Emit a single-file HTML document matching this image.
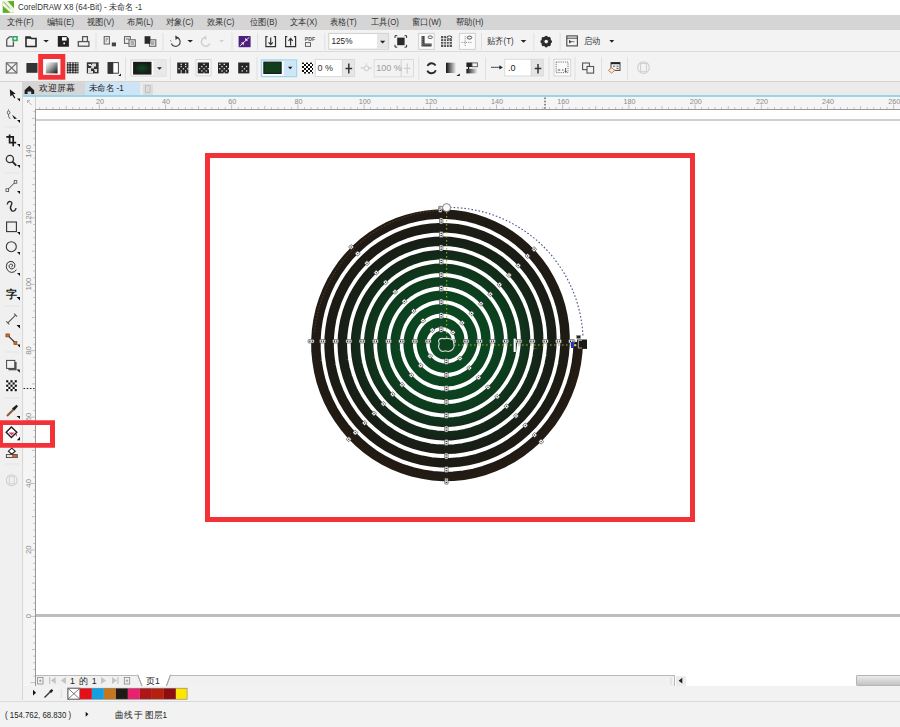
<!DOCTYPE html>
<html><head><meta charset="utf-8">
<style>
*{margin:0;padding:0;box-sizing:border-box}
html,body{width:900px;height:727px;overflow:hidden;background:#f2f2f2;font-family:"Liberation Sans",sans-serif;color:#222}
.a{position:absolute}
.t{position:absolute;white-space:nowrap;line-height:1;font-size:9px;color:#333;transform-origin:0 0}
.m{font-size:8.5px;transform:scaleX(0.92)}
#title{left:0;top:0;width:900px;height:15px;background:#fff}
#menu{left:0;top:15px;width:900px;height:15px;background:#d5d5d5}
#tb1{left:0;top:30px;width:900px;height:22px;background:#f3f3f3;border-bottom:1px solid #dcdcdc}
#tb2{left:0;top:52px;width:900px;height:30px;background:#f3f3f3;border-bottom:1px solid #d4d4d4}
#tabs{left:23px;top:82px;width:877px;height:13px;background:#ebebeb}
#blue{left:23px;top:95.2px;width:877px;height:1.6px;background:#98d5e8}
#tool{left:0;top:82px;width:23px;height:618px;background:#f0f0f0;border-right:1px solid #d6d6d6}
#hrul{left:23px;top:97px;width:877px;height:12px;background:#f5f5f5}
#vrul{left:23px;top:97px;width:12px;height:589px;background:#f5f5f5}
#canvas{left:35px;top:109px;width:865px;height:577px;background:#fff;border-left:1px solid #999;border-top:1px solid #999}
.sep{position:absolute;width:1px;background:#dadada}
</style></head><body>
<div class="a" id="title"></div>
<div class="a" id="menu"></div>
<div class="a" id="tb1"></div>
<div class="a" id="tb2"></div>
<div class="a" id="tool"></div>
<div class="a" id="tabs"></div>
<div class="a" id="blue"></div>
<div class="a" id="hrul"></div>
<div class="a" id="vrul"></div>
<div class="a" id="canvas"></div>

<!-- title -->
<div class="t" style="left:18px;top:3px;font-size:9px;color:#333;transform:scaleX(0.89)">CorelDRAW X8 (64-Bit) - 未命名 -1</div>
<!-- menu -->
<div class="t m" style="left:7px;top:18px">文件(F)</div>
<div class="t m" style="left:47px;top:18px">编辑(E)</div>
<div class="t m" style="left:87px;top:18px">视图(V)</div>
<div class="t m" style="left:127px;top:18px">布局(L)</div>
<div class="t m" style="left:166px;top:18px">对象(C)</div>
<div class="t m" style="left:207px;top:18px">效果(C)</div>
<div class="t m" style="left:250px;top:18px">位图(B)</div>
<div class="t m" style="left:290px;top:18px">文本(X)</div>
<div class="t m" style="left:330px;top:18px">表格(T)</div>
<div class="t m" style="left:371px;top:18px">工具(O)</div>
<div class="t m" style="left:412px;top:18px">窗口(W)</div>
<div class="t m" style="left:456px;top:18px">帮助(H)</div>


<!-- toolbar1 icons -->
<svg class="a" style="left:0;top:0" width="900" height="100" viewBox="0 0 900 100">
<g fill="none" stroke="#555" stroke-width="1.3">
<path d="M6.7 39.5 L9.5 36.8 L12 36.8 M13.4 41.5 V46.2 H6.7 V39.5"/>
</g>
<rect x="12.2" y="36" width="5.6" height="5.2" fill="#2ea85a"/>
<path d="M15 37.2 V40 M13.6 38.6 H16.4" stroke="#fff" stroke-width="1"/>
<path d="M26 37 H30 L31.5 38.5 H36 V46.5 H26 Z" fill="none" stroke="#2a2a2a" stroke-width="1.6"/>
<path d="M26 37 H30 L31.5 38.8 H26 Z" fill="#2a2a2a"/>
<path d="M43.3 40 H48.9 L46.1 42.6 Z" fill="#222"/>
<path d="M57.8 36 H66.5 L68.9 38.4 V46.7 H57.8 Z" fill="#222"/>
<rect x="62" y="37.2" width="4.6" height="3.4" fill="#fff"/>
<rect x="63.4" y="42.6" width="1.6" height="1.6" fill="#fff"/>
<g fill="none" stroke="#555" stroke-width="1.3">
<path d="M82.6 41.6 V36.6 H87.4 V41.6"/>
<rect x="78.3" y="41.6" width="10.6" height="4.6"/>
</g>
<rect x="95.5" y="33" width="1" height="17" fill="#e0e0e0"/>

<!-- logo -->
<rect x="2.7" y="1.1" width="11.3" height="11.7" fill="#5cae22"/>
<path d="M2.7 1.1 H7.4 L14 8.2 V12.8 H10.6 L2.7 5.8 Z" fill="#eef8dc"/>
<path d="M3.6 1.8 L10 8.6" stroke="#8a9a70" stroke-width="1"/>
<!-- cut/copy/paste -->
<g fill="none" stroke="#666" stroke-width="1.1">
<rect x="104.2" y="36.6" width="5.2" height="7.4"/>
<path d="M105.6 39 H108 M105.6 41 H107"/>
<rect x="124.5" y="36.6" width="5.8" height="6.8"/>
<rect x="129" y="39.8" width="6.3" height="6.5" fill="#f3f3f3"/>
<path d="M130.5 42 H134 M130.5 44 H134 M125.8 39 H129"/>
<rect x="149.5" y="39.8" width="6.3" height="6.5" fill="#f3f3f3"/>
<path d="M151 42 H154.5 M151 44 H154.5"/>
</g>
<rect x="111.8" y="42.5" width="4.2" height="3.8" fill="#444"/>
<rect x="144.6" y="36.2" width="5.8" height="7.6" fill="#2a2a2a"/>
<rect x="162.5" y="33" width="1" height="17" fill="#e0e0e0"/>
<!-- undo/redo -->
<path d="M177.5 37.6 A4.6 4.6 0 1 1 171.3 43.5" fill="none" stroke="#4a4a4a" stroke-width="1.2"/>
<path d="M175.2 35.6 L178.8 37.6 L175.6 40 Z" fill="#3a3a3a"/>
<path d="M171 41.5 L170.5 40" stroke="#888" stroke-width="1"/>
<path d="M187.4 40 H193 L190.2 42.6 Z" fill="#222"/>
<path d="M204.5 37.6 A4.4 4.4 0 1 0 209.8 43.5" fill="none" stroke="#cfcfcf" stroke-width="1.5"/>
<path d="M206.5 35.6 L203 37.6 L206.2 40 Z" fill="#cfcfcf"/>
<path d="M219.3 40 H224 L221.6 42.5 Z" fill="#cfcfcf"/>
<rect x="231.5" y="33" width="1" height="17" fill="#e0e0e0"/>
<!-- purple -->
<rect x="238.6" y="36" width="12" height="11.2" fill="#4e1f80"/>
<path d="M239.8 46 L249.4 37.2" stroke="#e6dcf0" stroke-width="1"/>
<path d="M241 42.5 L243.8 42.6 L243.6 45.4 Z M248 40.7 L245.2 40.6 L245.4 37.8 Z" fill="#fff"/>
<rect x="257" y="33" width="1" height="17" fill="#e0e0e0"/>
<!-- import/export -->
<g fill="none" stroke="#333" stroke-width="1.2">
<path d="M267.6 36.6 H265.9 V46.6 H275.5 V36.6 H273.8"/>
<path d="M270.7 37.5 V44.5 M268.6 42.3 L270.7 44.6 L272.8 42.3"/>
<path d="M287.3 36.6 H285.6 V46.6 H295.6 V36.6 H293.9"/>
<path d="M290.6 45.5 V38.5 M288.5 40.8 L290.6 38.4 L292.7 40.8"/>
</g>
<text x="304.8" y="41.2" font-size="5.2" font-family="Liberation Sans" fill="#555" font-weight="bold">PDF</text>
<rect x="305.5" y="42.6" width="5" height="3.8" fill="none" stroke="#666" stroke-width="1"/>
<rect x="324.3" y="33" width="1" height="17" fill="#e0e0e0"/>
<!-- zoom combo -->
<rect x="328.8" y="33.4" width="59.8" height="15.8" fill="#fff" stroke="#cfcfcf" stroke-width="1"/>
<rect x="377" y="33.9" width="11.1" height="14.8" fill="#e6e6e6"/>
<path d="M380 40.8 H385.3 L382.65 43.4 Z" fill="#222"/>
<!-- fullscreen -->
<rect x="397.2" y="37.6" width="7.4" height="7.6" fill="#2a2a2a"/>
<path d="M395 38 V35.7 H397.3 M404.5 35.7 H406.6 V38 M406.6 44.8 V47.1 H404.5 M397.3 47.1 H395 V44.8" fill="none" stroke="#333" stroke-width="1"/>
<!-- rulers/grid/guides -->
<rect x="418.6" y="33.4" width="15.6" height="16" fill="#fbfbfb" stroke="#d0d0d0" stroke-width="1"/>
<path d="M421.5 36 V46.6 H431.6 V43.5 H424.6 V36 Z" fill="#444"/>
<path d="M422.6 37 V45.5 M423.5 44.6 H431" stroke="#bbb" stroke-width="0.6" stroke-dasharray="1 1"/>
<ellipse cx="430.2" cy="37.2" rx="2.2" ry="1.4" fill="#f4f4f4" stroke="#555" stroke-width="0.9"/>
<g fill="#555">
<rect x="441" y="36" width="11" height="11"/>
</g>
<path d="M443.7 36 V47 M446.5 36 V47 M449.2 36 V47 M441 38.7 H452 M441 41.5 H452 M441 44.2 H452" stroke="#eee" stroke-width="0.9"/>
<ellipse cx="449.4" cy="37.4" rx="2.3" ry="1.5" fill="#f4f4f4" stroke="#444" stroke-width="0.9"/>
<rect x="459.4" y="33.4" width="16" height="16" fill="#fbfbfb" stroke="#d0d0d0" stroke-width="1"/>
<path d="M465.2 36 V47 M461.5 42.4 H472.5" stroke="#777" stroke-width="0.8" stroke-dasharray="1.2 1"/>
<ellipse cx="469.5" cy="37.6" rx="2.3" ry="1.5" fill="#f4f4f4" stroke="#444" stroke-width="0.9"/>
<rect x="481" y="33" width="1" height="17" fill="#e0e0e0"/>
<path d="M520.7 40 H526.3 L523.5 42.8 Z" fill="#222"/>
<rect x="533.3" y="33" width="1" height="17" fill="#e0e0e0"/>
<!-- gear -->
<g transform="translate(546.2 41.6)">
<circle r="4" fill="none" stroke="#2a2a2a" stroke-width="2.2"/>
<g fill="#2a2a2a">
<rect x="-1.1" y="-5.7" width="2.2" height="11.4"/>
<rect x="-5.7" y="-1.1" width="11.4" height="2.2"/>
<rect x="-1.1" y="-5.7" width="2.2" height="11.4" transform="rotate(45)"/>
<rect x="-1.1" y="-5.7" width="2.2" height="11.4" transform="rotate(-45)"/>
</g>
<circle r="1.8" fill="#f3f3f3"/>
</g>
<rect x="559.6" y="33" width="1" height="17" fill="#e0e0e0"/>
<!-- launch -->
<rect x="566.8" y="35.9" width="10.6" height="10" fill="none" stroke="#444" stroke-width="1.1"/>
<path d="M566.8 38.2 H577.4" stroke="#444" stroke-width="1"/>
<path d="M569 39.8 V43.6 L571.8 41.7 Z" fill="#444"/>
<path d="M569 41.7 H574.5" stroke="#444" stroke-width="0.7"/>
<path d="M609.4 40 H614.2 L611.8 42.8 Z" fill="#222"/>

</svg>
<div class="t" style="left:331.5px;top:37.5px;font-size:8.2px;color:#222">125%</div>
<div class="t m" style="left:487px;top:37px">贴齐(T)</div>
<div class="t m" style="left:583.5px;top:37px">启动</div>


<!-- toolbar2 icons -->
<svg class="a" style="left:0;top:0" width="900" height="100" viewBox="0 0 900 100">
<defs>
<linearGradient id="g1" x1="0" y1="0" x2="1" y2="1"><stop offset="0" stop-color="#fff"/><stop offset="0.35" stop-color="#bbb"/><stop offset="1" stop-color="#111"/></linearGradient>
<linearGradient id="g2" x1="0" y1="0" x2="1" y2="0"><stop offset="0" stop-color="#111"/><stop offset="1" stop-color="#f4f4f4"/></linearGradient>
<radialGradient id="g3"><stop offset="0" stop-color="#0e4a22"/><stop offset="1" stop-color="#161a16"/></radialGradient>
<pattern id="chk" width="2.2" height="2.2" patternUnits="userSpaceOnUse"><rect width="2.2" height="2.2" fill="#222"/><rect width="1.1" height="1.1" fill="#fff"/><rect x="1.1" y="1.1" width="1.1" height="1.1" fill="#fff"/></pattern>
<pattern id="chk2" width="4" height="4" patternUnits="userSpaceOnUse"><rect width="4" height="4" fill="#fff"/><rect width="2" height="2" fill="#111"/><rect x="2" y="2" width="2" height="2" fill="#111"/></pattern>
<pattern id="dots" width="2.7" height="2.7" patternUnits="userSpaceOnUse"><rect width="2.7" height="2.7" fill="#222"/><circle cx="1.35" cy="1.35" r="0.8" fill="#fff"/></pattern>
</defs>
<g fill="none" stroke="#6a6a6a" stroke-width="1.1">
<rect x="6.3" y="62.8" width="10.6" height="10.2"/>
<path d="M6.3 62.8 L16.9 73 M16.9 62.8 L6.3 73"/>
</g>
<rect x="26.4" y="63" width="11.1" height="9.8" fill="#333"/>
<rect x="38.2" y="54" width="27.1" height="25.7" fill="#f23236"/>
<rect x="43.1" y="59" width="17.3" height="15.8" fill="#fff"/>
<rect x="45.8" y="62.3" width="11.8" height="11.1" fill="url(#g1)"/>
<rect x="66.7" y="62.3" width="11.8" height="11.1" fill="url(#dots)"/>
<rect x="86.8" y="62.3" width="11.8" height="11.1" fill="#333"/>
<path d="M88 64 h3 v2 h-2 z M92 63.5 h4 v3 h-2 v2 h-3 z M88 68 h3 v3 h2 v2 h-5 z M94 69 h3 v3 h-2 z M90 65 h2 v2" fill="#ddd"/>
<rect x="108.2" y="62.6" width="10.2" height="10.6" fill="#fff" stroke="#444" stroke-width="1"/>
<rect x="107.7" y="62.1" width="5.6" height="11.6" fill="#333"/>
<path d="M118.2 76 L121 73.4 V76 Z" fill="#222"/>
<rect x="125" y="57" width="1" height="23" fill="#e0e0e0"/>
<rect x="131" y="60" width="35" height="16" fill="#fff" stroke="#d4d4d4" stroke-width="1"/>
<rect x="133.8" y="62.5" width="17" height="11.4" fill="url(#g3)" stroke="#1a1a1a" stroke-width="1.4"/>
<rect x="153.4" y="60.5" width="12.1" height="15" fill="#e8e8e8"/>
<path d="M157 67.2 H162 L159.5 69.7 Z" fill="#222"/>
<rect x="169.8" y="57" width="1" height="23" fill="#e0e0e0"/>
<rect x="177.2" y="62.5" width="11.2" height="10.9" fill="#262626"/><g fill="#eee"><rect x="178.4" y="68.1" width="1.3" height="1.3"/><rect x="180.6" y="65.9" width="1.3" height="1.3"/><rect x="180.6" y="70.3" width="1.3" height="1.3"/><rect x="182.8" y="68.1" width="1.3" height="1.3"/><rect x="185.0" y="65.9" width="1.3" height="1.3"/><rect x="185.0" y="70.3" width="1.3" height="1.3"/><rect x="187.2" y="68.1" width="1.3" height="1.3"/><rect x="180.6" y="63.7" width="1.3" height="1.3"/><rect x="180.6" y="72.5" width="1.3" height="1.3"/><rect x="185.0" y="63.7" width="1.3" height="1.3"/><rect x="185.0" y="72.5" width="1.3" height="1.3"/></g>
<rect x="196" y="59.5" width="15" height="16.3" fill="#fafafa" stroke="#d6d6d6" stroke-width="1"/>
<rect x="197.8" y="62.5" width="11.2" height="10.9" fill="#262626"/><g fill="#ddd"><rect x="201.2" y="65.9" width="1.3" height="1.3"/><rect x="205.6" y="65.9" width="1.3" height="1.3"/><rect x="203.4" y="68.1" width="1.3" height="1.3"/><rect x="201.2" y="70.3" width="1.3" height="1.3"/><rect x="205.6" y="70.3" width="1.3" height="1.3"/><rect x="203.4" y="63.7" width="1.3" height="1.3"/><rect x="199.0" y="68.1" width="1.3" height="1.3"/><rect x="207.8" y="68.1" width="1.3" height="1.3"/><rect x="203.4" y="72.5" width="1.3" height="1.3"/></g>
<rect x="218" y="62.5" width="11" height="10.9" fill="#262626"/><g fill="#eee"><rect x="219.2" y="63.7" width="1.3" height="1.3"/><rect x="219.2" y="68.1" width="1.3" height="1.3"/><rect x="221.4" y="65.9" width="1.3" height="1.3"/><rect x="221.4" y="70.3" width="1.3" height="1.3"/><rect x="223.6" y="63.7" width="1.3" height="1.3"/><rect x="223.6" y="68.1" width="1.3" height="1.3"/><rect x="223.6" y="72.5" width="1.3" height="1.3"/><rect x="225.8" y="65.9" width="1.3" height="1.3"/><rect x="225.8" y="70.3" width="1.3" height="1.3"/><rect x="228.0" y="68.1" width="1.3" height="1.3"/><rect x="228.0" y="72.5" width="1.3" height="1.3"/></g>
<rect x="238.2" y="62.5" width="11.2" height="10.9" fill="#262626"/><g fill="#ddd"><rect x="241.6" y="65.9" width="1.3" height="1.3"/><rect x="246.0" y="65.9" width="1.3" height="1.3"/><rect x="243.8" y="68.1" width="1.3" height="1.3"/><rect x="241.6" y="70.3" width="1.3" height="1.3"/><rect x="246.0" y="70.3" width="1.3" height="1.3"/></g>
<rect x="256.5" y="57" width="1" height="23" fill="#e0e0e0"/>
<rect x="261.5" y="60" width="35" height="16.5" fill="#fff" stroke="#9fd6ee" stroke-width="1.4"/>
<rect x="263.9" y="62.2" width="17.2" height="11.2" fill="#0f3f1b" stroke="#1b1b1b" stroke-width="1.2"/>
<rect x="283.7" y="60.7" width="12.2" height="15.1" fill="#cfe6f8"/>
<path d="M288 66.8 H292.4 L290.2 69.3 Z" fill="#111"/>
<rect x="302" y="62.6" width="11" height="11" fill="url(#chk2)"/>
<rect x="315.3" y="59.5" width="27.1" height="17.1" fill="#fff" stroke="#dadada" stroke-width="1"/>
<rect x="342.4" y="59.5" width="12.2" height="17.1" fill="#e6e6e6" stroke="#dadada" stroke-width="1"/>
<path d="M348.8 63.4 V73.5 M345.5 68.4 H352.2" stroke="#333" stroke-width="1.5"/>
<g stroke="#c8c8c8" stroke-width="1" fill="none">
<path d="M360.5 68 H363.8 M369 68 H372 M366.4 63.4 V64.8"/>
<circle cx="366.4" cy="68.3" r="2.4"/>
<rect x="374.1" y="59.5" width="27.1" height="17.3" stroke="#dcdcdc"/>
<rect x="401.2" y="59.5" width="12.3" height="17.3" stroke="#dcdcdc"/>
<path d="M407.3 63.4 V73.5 M404 68.4 H410.6" stroke="#d0d0d0" stroke-width="1.3"/>
</g>
<rect x="418.3" y="57" width="1" height="23" fill="#e0e0e0"/>
<path d="M427.5 66 A4.6 4.6 0 0 1 435.6 65.4 M435.8 70.2 A4.6 4.6 0 0 1 427.3 70.6" fill="none" stroke="#2a2a2a" stroke-width="1.8"/>
<rect x="446" y="62.7" width="10.2" height="10.3" fill="url(#g2)"/>
<path d="M456.3 76 L459.8 73.5 V76 Z" fill="#222"/>
<rect x="466.4" y="62.5" width="5.6" height="4.5" fill="#222"/>
<rect x="472" y="62.9" width="5.4" height="3.8" fill="none" stroke="#555" stroke-width="0.9"/>
<rect x="466.4" y="68.8" width="11.2" height="4.6" fill="url(#g2)"/>
<rect x="468" y="66.6" width="1.2" height="2.4" fill="#222"/>
<rect x="485" y="57" width="1" height="23" fill="#e0e0e0"/>
<path d="M491.3 67.4 H500" stroke="#222" stroke-width="1.1" stroke-dasharray="1.3 0.7"/>
<path d="M499.4 65.2 L502.9 67.4 L499.4 69.6 Z" fill="#222"/>
<rect x="504.7" y="59.3" width="26.6" height="16.7" fill="#fff" stroke="#dadada" stroke-width="1"/>
<rect x="531.3" y="59.3" width="12" height="16.7" fill="#e4e4e4" stroke="#dadada" stroke-width="1"/>
<path d="M538 64 V73.4 M534.7 68.6 H541.3" stroke="#333" stroke-width="1.5"/>
<rect x="548.5" y="57" width="1" height="23" fill="#e0e0e0"/>
<rect x="554" y="59.3" width="16.7" height="16.7" fill="#fafafa" stroke="#d6d6d6" stroke-width="1"/>
<rect x="556.2" y="62" width="11.8" height="10.6" fill="none" stroke="#555" stroke-width="0.8" stroke-dasharray="1.2 1"/>
<path d="M557.8 70 h2.5 M562 70 h1.5 M565.6 68 v3.6 M564.6 71 l1 1 l1 -1" stroke="#444" stroke-width="0.9" fill="none"/>
<rect x="574.5" y="57" width="1" height="23" fill="#e0e0e0"/>
<g fill="#f3f3f3" stroke="#555" stroke-width="1.1">
<rect x="582.6" y="63" width="6.8" height="6.6"/>
<rect x="587" y="66.5" width="6.6" height="6.6"/>
</g>
<rect x="601" y="57" width="1" height="23" fill="#e0e0e0"/>
<rect x="611" y="62.6" width="9" height="7.8" fill="none" stroke="#444" stroke-width="1"/>
<rect x="611" y="62.4" width="9" height="1.8" fill="#222"/>
<path d="M613 66.2 h2.2 M616.5 66.2 h2 M616.5 68.4 h2" stroke="#444" stroke-width="0.9"/>
<path d="M611.6 67.8 L614.8 70.4 L611.6 73 L608.4 70.4 Z" fill="#f4ece4" stroke="#c8804a" stroke-width="1"/>
<rect x="627" y="57" width="1" height="23" fill="#e0e0e0"/>
<circle cx="643.5" cy="67.6" r="5.8" fill="none" stroke="#d0d0d0" stroke-width="1.1"/>
<rect x="640.6" y="63.5" width="5.8" height="8.2" fill="none" stroke="#cfcfcf" stroke-width="1"/>
</svg>
<div class="t" style="left:317.5px;top:63.6px;font-size:9px;color:#333">0 %</div>
<div class="t" style="left:376.2px;top:63.6px;font-size:9px;color:#9a9a9a">100 %</div>
<div class="t" style="left:508px;top:63.6px;font-size:9px;color:#222">.0</div>


<!-- tabs -->
<div class="a" style="left:22.5px;top:82.3px;width:62px;height:12.7px;background:#d6d6d6"></div>
<div class="a" style="left:84.5px;top:82.3px;width:55px;height:12.7px;background:#cde4f7"></div>
<div class="a" style="left:143px;top:83.5px;width:9.5px;height:11px;background:#dcdcdc"></div>
<svg class="a" style="left:0;top:80px" width="160" height="20" viewBox="0 80 160 20">
<path d="M24.6 90.2 L29.4 85.8 L34.2 90.2 V94 H31.2 V91.4 H27.6 V94 H24.6 Z" fill="#222"/>
<rect x="145.5" y="85.5" width="4.5" height="7" fill="none" stroke="#bbb" stroke-width="0.8"/>
</svg>
<div class="t" style="left:39.4px;top:84.4px;font-size:8.6px;color:#222">欢迎屏幕</div>
<div class="t" style="left:89px;top:84.4px;font-size:8.6px;color:#222;transform:scaleX(0.94)">未命名 -1</div>

<!-- rulers -->
<svg class="a" style="left:0;top:0" width="900" height="727" viewBox="0 0 900 727">
<g fill="#b4b4b4">
<rect x="39.3" y="107.2" width="0.8" height="1.8"/>
<rect x="45.9" y="107.2" width="0.8" height="1.8"/>
<rect x="52.6" y="107.2" width="0.8" height="1.8"/>
<rect x="59.2" y="107.2" width="0.8" height="1.8"/>
<rect x="65.8" y="106.0" width="0.8" height="3"/>
<rect x="72.4" y="107.2" width="0.8" height="1.8"/>
<rect x="79.0" y="107.2" width="0.8" height="1.8"/>
<rect x="85.7" y="107.2" width="0.8" height="1.8"/>
<rect x="92.3" y="107.2" width="0.8" height="1.8"/>
<rect x="98.9" y="104.5" width="0.8" height="4.5"/>
<rect x="105.5" y="107.2" width="0.8" height="1.8"/>
<rect x="112.1" y="107.2" width="0.8" height="1.8"/>
<rect x="118.8" y="107.2" width="0.8" height="1.8"/>
<rect x="125.4" y="107.2" width="0.8" height="1.8"/>
<rect x="132.0" y="106.0" width="0.8" height="3"/>
<rect x="138.6" y="107.2" width="0.8" height="1.8"/>
<rect x="145.2" y="107.2" width="0.8" height="1.8"/>
<rect x="151.9" y="107.2" width="0.8" height="1.8"/>
<rect x="158.5" y="107.2" width="0.8" height="1.8"/>
<rect x="165.1" y="104.5" width="0.8" height="4.5"/>
<rect x="171.7" y="107.2" width="0.8" height="1.8"/>
<rect x="178.3" y="107.2" width="0.8" height="1.8"/>
<rect x="185.0" y="107.2" width="0.8" height="1.8"/>
<rect x="191.6" y="107.2" width="0.8" height="1.8"/>
<rect x="198.2" y="106.0" width="0.8" height="3"/>
<rect x="204.8" y="107.2" width="0.8" height="1.8"/>
<rect x="211.4" y="107.2" width="0.8" height="1.8"/>
<rect x="218.1" y="107.2" width="0.8" height="1.8"/>
<rect x="224.7" y="107.2" width="0.8" height="1.8"/>
<rect x="231.3" y="104.5" width="0.8" height="4.5"/>
<rect x="237.9" y="107.2" width="0.8" height="1.8"/>
<rect x="244.5" y="107.2" width="0.8" height="1.8"/>
<rect x="251.2" y="107.2" width="0.8" height="1.8"/>
<rect x="257.8" y="107.2" width="0.8" height="1.8"/>
<rect x="264.4" y="106.0" width="0.8" height="3"/>
<rect x="271.0" y="107.2" width="0.8" height="1.8"/>
<rect x="277.6" y="107.2" width="0.8" height="1.8"/>
<rect x="284.3" y="107.2" width="0.8" height="1.8"/>
<rect x="290.9" y="107.2" width="0.8" height="1.8"/>
<rect x="297.5" y="104.5" width="0.8" height="4.5"/>
<rect x="304.1" y="107.2" width="0.8" height="1.8"/>
<rect x="310.7" y="107.2" width="0.8" height="1.8"/>
<rect x="317.4" y="107.2" width="0.8" height="1.8"/>
<rect x="324.0" y="107.2" width="0.8" height="1.8"/>
<rect x="330.6" y="106.0" width="0.8" height="3"/>
<rect x="337.2" y="107.2" width="0.8" height="1.8"/>
<rect x="343.8" y="107.2" width="0.8" height="1.8"/>
<rect x="350.5" y="107.2" width="0.8" height="1.8"/>
<rect x="357.1" y="107.2" width="0.8" height="1.8"/>
<rect x="363.7" y="104.5" width="0.8" height="4.5"/>
<rect x="370.3" y="107.2" width="0.8" height="1.8"/>
<rect x="376.9" y="107.2" width="0.8" height="1.8"/>
<rect x="383.6" y="107.2" width="0.8" height="1.8"/>
<rect x="390.2" y="107.2" width="0.8" height="1.8"/>
<rect x="396.8" y="106.0" width="0.8" height="3"/>
<rect x="403.4" y="107.2" width="0.8" height="1.8"/>
<rect x="410.0" y="107.2" width="0.8" height="1.8"/>
<rect x="416.7" y="107.2" width="0.8" height="1.8"/>
<rect x="423.3" y="107.2" width="0.8" height="1.8"/>
<rect x="429.9" y="104.5" width="0.8" height="4.5"/>
<rect x="436.5" y="107.2" width="0.8" height="1.8"/>
<rect x="443.1" y="107.2" width="0.8" height="1.8"/>
<rect x="449.8" y="107.2" width="0.8" height="1.8"/>
<rect x="456.4" y="107.2" width="0.8" height="1.8"/>
<rect x="463.0" y="106.0" width="0.8" height="3"/>
<rect x="469.6" y="107.2" width="0.8" height="1.8"/>
<rect x="476.2" y="107.2" width="0.8" height="1.8"/>
<rect x="482.9" y="107.2" width="0.8" height="1.8"/>
<rect x="489.5" y="107.2" width="0.8" height="1.8"/>
<rect x="496.1" y="104.5" width="0.8" height="4.5"/>
<rect x="502.7" y="107.2" width="0.8" height="1.8"/>
<rect x="509.3" y="107.2" width="0.8" height="1.8"/>
<rect x="516.0" y="107.2" width="0.8" height="1.8"/>
<rect x="522.6" y="107.2" width="0.8" height="1.8"/>
<rect x="529.2" y="106.0" width="0.8" height="3"/>
<rect x="535.8" y="107.2" width="0.8" height="1.8"/>
<rect x="542.4" y="107.2" width="0.8" height="1.8"/>
<rect x="549.1" y="107.2" width="0.8" height="1.8"/>
<rect x="555.7" y="107.2" width="0.8" height="1.8"/>
<rect x="562.3" y="104.5" width="0.8" height="4.5"/>
<rect x="568.9" y="107.2" width="0.8" height="1.8"/>
<rect x="575.5" y="107.2" width="0.8" height="1.8"/>
<rect x="582.2" y="107.2" width="0.8" height="1.8"/>
<rect x="588.8" y="107.2" width="0.8" height="1.8"/>
<rect x="595.4" y="106.0" width="0.8" height="3"/>
<rect x="602.0" y="107.2" width="0.8" height="1.8"/>
<rect x="608.6" y="107.2" width="0.8" height="1.8"/>
<rect x="615.3" y="107.2" width="0.8" height="1.8"/>
<rect x="621.9" y="107.2" width="0.8" height="1.8"/>
<rect x="628.5" y="104.5" width="0.8" height="4.5"/>
<rect x="635.1" y="107.2" width="0.8" height="1.8"/>
<rect x="641.7" y="107.2" width="0.8" height="1.8"/>
<rect x="648.4" y="107.2" width="0.8" height="1.8"/>
<rect x="655.0" y="107.2" width="0.8" height="1.8"/>
<rect x="661.6" y="106.0" width="0.8" height="3"/>
<rect x="668.2" y="107.2" width="0.8" height="1.8"/>
<rect x="674.8" y="107.2" width="0.8" height="1.8"/>
<rect x="681.5" y="107.2" width="0.8" height="1.8"/>
<rect x="688.1" y="107.2" width="0.8" height="1.8"/>
<rect x="694.7" y="104.5" width="0.8" height="4.5"/>
<rect x="701.3" y="107.2" width="0.8" height="1.8"/>
<rect x="707.9" y="107.2" width="0.8" height="1.8"/>
<rect x="714.6" y="107.2" width="0.8" height="1.8"/>
<rect x="721.2" y="107.2" width="0.8" height="1.8"/>
<rect x="727.8" y="106.0" width="0.8" height="3"/>
<rect x="734.4" y="107.2" width="0.8" height="1.8"/>
<rect x="741.0" y="107.2" width="0.8" height="1.8"/>
<rect x="747.7" y="107.2" width="0.8" height="1.8"/>
<rect x="754.3" y="107.2" width="0.8" height="1.8"/>
<rect x="760.9" y="104.5" width="0.8" height="4.5"/>
<rect x="767.5" y="107.2" width="0.8" height="1.8"/>
<rect x="774.1" y="107.2" width="0.8" height="1.8"/>
<rect x="780.8" y="107.2" width="0.8" height="1.8"/>
<rect x="787.4" y="107.2" width="0.8" height="1.8"/>
<rect x="794.0" y="106.0" width="0.8" height="3"/>
<rect x="800.6" y="107.2" width="0.8" height="1.8"/>
<rect x="807.2" y="107.2" width="0.8" height="1.8"/>
<rect x="813.9" y="107.2" width="0.8" height="1.8"/>
<rect x="820.5" y="107.2" width="0.8" height="1.8"/>
<rect x="827.1" y="104.5" width="0.8" height="4.5"/>
<rect x="833.7" y="107.2" width="0.8" height="1.8"/>
<rect x="840.3" y="107.2" width="0.8" height="1.8"/>
<rect x="847.0" y="107.2" width="0.8" height="1.8"/>
<rect x="853.6" y="107.2" width="0.8" height="1.8"/>
<rect x="860.2" y="106.0" width="0.8" height="3"/>
<rect x="866.8" y="107.2" width="0.8" height="1.8"/>
<rect x="873.4" y="107.2" width="0.8" height="1.8"/>
<rect x="880.1" y="107.2" width="0.8" height="1.8"/>
<rect x="886.7" y="107.2" width="0.8" height="1.8"/>
<rect x="893.3" y="104.5" width="0.8" height="4.5"/>
<rect x="30.5" y="682.3" width="4.5" height="0.8"/>
<rect x="33.2" y="675.7" width="1.8" height="0.8"/>
<rect x="33.2" y="669.0" width="1.8" height="0.8"/>
<rect x="33.2" y="662.4" width="1.8" height="0.8"/>
<rect x="33.2" y="655.7" width="1.8" height="0.8"/>
<rect x="32.0" y="649.1" width="3" height="0.8"/>
<rect x="33.2" y="642.5" width="1.8" height="0.8"/>
<rect x="33.2" y="635.8" width="1.8" height="0.8"/>
<rect x="33.2" y="629.2" width="1.8" height="0.8"/>
<rect x="33.2" y="622.5" width="1.8" height="0.8"/>
<rect x="30.5" y="615.9" width="4.5" height="0.8"/>
<rect x="33.2" y="609.3" width="1.8" height="0.8"/>
<rect x="33.2" y="602.6" width="1.8" height="0.8"/>
<rect x="33.2" y="596.0" width="1.8" height="0.8"/>
<rect x="33.2" y="589.3" width="1.8" height="0.8"/>
<rect x="32.0" y="582.7" width="3" height="0.8"/>
<rect x="33.2" y="576.1" width="1.8" height="0.8"/>
<rect x="33.2" y="569.4" width="1.8" height="0.8"/>
<rect x="33.2" y="562.8" width="1.8" height="0.8"/>
<rect x="33.2" y="556.1" width="1.8" height="0.8"/>
<rect x="30.5" y="549.5" width="4.5" height="0.8"/>
<rect x="33.2" y="542.9" width="1.8" height="0.8"/>
<rect x="33.2" y="536.2" width="1.8" height="0.8"/>
<rect x="33.2" y="529.6" width="1.8" height="0.8"/>
<rect x="33.2" y="522.9" width="1.8" height="0.8"/>
<rect x="32.0" y="516.3" width="3" height="0.8"/>
<rect x="33.2" y="509.7" width="1.8" height="0.8"/>
<rect x="33.2" y="503.0" width="1.8" height="0.8"/>
<rect x="33.2" y="496.4" width="1.8" height="0.8"/>
<rect x="33.2" y="489.7" width="1.8" height="0.8"/>
<rect x="30.5" y="483.1" width="4.5" height="0.8"/>
<rect x="33.2" y="476.5" width="1.8" height="0.8"/>
<rect x="33.2" y="469.8" width="1.8" height="0.8"/>
<rect x="33.2" y="463.2" width="1.8" height="0.8"/>
<rect x="33.2" y="456.5" width="1.8" height="0.8"/>
<rect x="32.0" y="449.9" width="3" height="0.8"/>
<rect x="33.2" y="443.3" width="1.8" height="0.8"/>
<rect x="33.2" y="436.6" width="1.8" height="0.8"/>
<rect x="33.2" y="430.0" width="1.8" height="0.8"/>
<rect x="33.2" y="423.3" width="1.8" height="0.8"/>
<rect x="30.5" y="416.7" width="4.5" height="0.8"/>
<rect x="33.2" y="410.1" width="1.8" height="0.8"/>
<rect x="33.2" y="403.4" width="1.8" height="0.8"/>
<rect x="33.2" y="396.8" width="1.8" height="0.8"/>
<rect x="33.2" y="390.1" width="1.8" height="0.8"/>
<rect x="32.0" y="383.5" width="3" height="0.8"/>
<rect x="33.2" y="376.9" width="1.8" height="0.8"/>
<rect x="33.2" y="370.2" width="1.8" height="0.8"/>
<rect x="33.2" y="363.6" width="1.8" height="0.8"/>
<rect x="33.2" y="356.9" width="1.8" height="0.8"/>
<rect x="30.5" y="350.3" width="4.5" height="0.8"/>
<rect x="33.2" y="343.7" width="1.8" height="0.8"/>
<rect x="33.2" y="337.0" width="1.8" height="0.8"/>
<rect x="33.2" y="330.4" width="1.8" height="0.8"/>
<rect x="33.2" y="323.7" width="1.8" height="0.8"/>
<rect x="32.0" y="317.1" width="3" height="0.8"/>
<rect x="33.2" y="310.5" width="1.8" height="0.8"/>
<rect x="33.2" y="303.8" width="1.8" height="0.8"/>
<rect x="33.2" y="297.2" width="1.8" height="0.8"/>
<rect x="33.2" y="290.5" width="1.8" height="0.8"/>
<rect x="30.5" y="283.9" width="4.5" height="0.8"/>
<rect x="33.2" y="277.3" width="1.8" height="0.8"/>
<rect x="33.2" y="270.6" width="1.8" height="0.8"/>
<rect x="33.2" y="264.0" width="1.8" height="0.8"/>
<rect x="33.2" y="257.3" width="1.8" height="0.8"/>
<rect x="32.0" y="250.7" width="3" height="0.8"/>
<rect x="33.2" y="244.1" width="1.8" height="0.8"/>
<rect x="33.2" y="237.4" width="1.8" height="0.8"/>
<rect x="33.2" y="230.8" width="1.8" height="0.8"/>
<rect x="33.2" y="224.1" width="1.8" height="0.8"/>
<rect x="30.5" y="217.5" width="4.5" height="0.8"/>
<rect x="33.2" y="210.9" width="1.8" height="0.8"/>
<rect x="33.2" y="204.2" width="1.8" height="0.8"/>
<rect x="33.2" y="197.6" width="1.8" height="0.8"/>
<rect x="33.2" y="190.9" width="1.8" height="0.8"/>
<rect x="32.0" y="184.3" width="3" height="0.8"/>
<rect x="33.2" y="177.7" width="1.8" height="0.8"/>
<rect x="33.2" y="171.0" width="1.8" height="0.8"/>
<rect x="33.2" y="164.4" width="1.8" height="0.8"/>
<rect x="33.2" y="157.7" width="1.8" height="0.8"/>
<rect x="30.5" y="151.1" width="4.5" height="0.8"/>
<rect x="33.2" y="144.5" width="1.8" height="0.8"/>
<rect x="33.2" y="137.8" width="1.8" height="0.8"/>
<rect x="33.2" y="131.2" width="1.8" height="0.8"/>
<rect x="33.2" y="124.5" width="1.8" height="0.8"/>
<rect x="32.0" y="117.9" width="3" height="0.8"/>
<rect x="33.2" y="111.3" width="1.8" height="0.8"/>
</g>
<g fill="#8a8a8a" font-family="Liberation Sans" font-size="7.2">
<text x="99.9" y="104" text-anchor="middle">20</text>
<text x="166.1" y="104" text-anchor="middle">40</text>
<text x="232.3" y="104" text-anchor="middle">60</text>
<text x="298.5" y="104" text-anchor="middle">80</text>
<text x="364.7" y="104" text-anchor="middle">100</text>
<text x="430.9" y="104" text-anchor="middle">120</text>
<text x="497.1" y="104" text-anchor="middle">140</text>
<text x="563.3" y="104" text-anchor="middle">160</text>
<text x="629.5" y="104" text-anchor="middle">180</text>
<text x="695.7" y="104" text-anchor="middle">200</text>
<text x="761.9" y="104" text-anchor="middle">220</text>
<text x="828.1" y="104" text-anchor="middle">240</text>
<text x="894.3" y="104" text-anchor="middle">260</text>
<text transform="translate(31 616.1) rotate(-90)" text-anchor="middle" font-size="7.8">0</text>
<text transform="translate(31 549.7) rotate(-90)" text-anchor="middle" font-size="7.8">20</text>
<text transform="translate(31 483.3) rotate(-90)" text-anchor="middle" font-size="7.8">40</text>
<text transform="translate(31 416.9) rotate(-90)" text-anchor="middle" font-size="7.8">60</text>
<text transform="translate(31 350.5) rotate(-90)" text-anchor="middle" font-size="7.8">80</text>
<text transform="translate(31 284.1) rotate(-90)" text-anchor="middle" font-size="7.8">100</text>
<text transform="translate(31 217.7) rotate(-90)" text-anchor="middle" font-size="7.8">120</text>
<text transform="translate(31 151.3) rotate(-90)" text-anchor="middle" font-size="7.8">140</text>
</g>
<rect x="35" y="97" width="0.8" height="12" fill="#c8c8c8"/>
<path d="M545 97.5 V109" stroke="#222" stroke-width="1" stroke-dasharray="1.6 1.6"/>
<path d="M27.5 100.5 L31.5 105 M27.5 100.5 V103 M27.5 100.5 H30" stroke="#aaa" stroke-width="0.8" fill="none"/>
<rect x="22.3" y="109" width="0.8" height="577" fill="#dadada"/>
</svg>

<!-- toolbox -->
<svg class="a" style="left:0;top:0" width="60" height="727" viewBox="0 0 60 727">
<g fill="#111">
<path d="M17 98.6 L20 98.6 L20 101.6 Z M17 120 L20 120 L20 123 Z M17 144 L20 144 L20 147 Z M17 165 L20 165 L20 168 Z M17 191 L20 191 L20 194 Z M17 232 L20 232 L20 235 Z M17 252 L20 252 L20 255 Z M17 273 L20 273 L20 276 Z M16.5 297 L20 297 L20 300.5 Z M16.5 325 L20 325 L20 328.5 Z M17 344.5 L20 344.5 L20 347.5 Z M16.5 369.5 L19.8 369.5 L19.8 372.7 Z M16.5 416 L20 416 L20 419 Z M17 437 L20 437 L20 440 Z"/>
</g>
<!-- pick -->
<path d="M9.8 89.2 L10.3 96.6 L12.1 94.9 L14.4 98.4 L15.4 97.7 L13.2 94.3 L15.6 93.8 Z" fill="#1a1a1a"/>
<!-- shape -->
<ellipse cx="8.6" cy="112.6" rx="1.3" ry="1.7" fill="none" stroke="#444" stroke-width="0.8"/>
<path d="M8.2 110.4 L8.6 109.4 M8.4 114.4 Q8.2 117 10.2 119" fill="none" stroke="#444" stroke-width="0.8"/>
<path d="M12 114.8 L17 118.6 L14.2 118.9 Z" fill="#1a1a1a"/>
<rect x="5" y="126.6" width="14" height="0.8" fill="#e0e0e0"/>
<!-- crop -->
<path d="M6.3 136.8 H13.2 V146.2 M9.6 134.6 V142.6 H16.2" fill="none" stroke="#1a1a1a" stroke-width="1.7"/>
<!-- zoom -->
<circle cx="9.9" cy="159" r="3.6" fill="none" stroke="#333" stroke-width="1.3"/>
<path d="M12.5 161.6 L16.3 165.6" stroke="#222" stroke-width="1.8"/>
<rect x="5" y="172.6" width="14" height="0.8" fill="#e0e0e0"/>
<!-- line -->
<path d="M7.4 190 L15.6 181.8" stroke="#444" stroke-width="1"/>
<rect x="6" y="188.8" width="2.6" height="2.6" fill="#fff" stroke="#444" stroke-width="0.8"/>
<rect x="14.2" y="180.6" width="2.6" height="2.6" fill="#fff" stroke="#444" stroke-width="0.8"/>
<!-- curve -->
<path d="M7.3 204.5 Q7.8 201 10.5 201.6 Q13 202.3 11 205.6 Q9.5 208.4 11.8 210.8 Q15.3 212 16 208" fill="none" stroke="#2a2a2a" stroke-width="1.4"/>
<!-- rect -->
<rect x="6.6" y="222" width="9.8" height="9.6" fill="none" stroke="#333" stroke-width="1.1"/>
<!-- ellipse -->
<circle cx="11.3" cy="246.7" r="5" fill="none" stroke="#333" stroke-width="1.1"/>
<!-- spiral -->
<path d="M11.3 266.8 Q12.8 266.5 12.6 265.2 Q12 263.5 10.3 264.2 Q8.6 265 9.2 267.2 Q10.2 269.7 13 268.8 Q15.5 267.6 14.8 264.2 Q13.8 261 10 261.4 Q6.3 262.2 6.3 266.5 Q6.8 271.6 11.5 272.4 Q15 272.6 16.4 269.6" fill="none" stroke="#333" stroke-width="1"/>
<!-- text -->
<text x="6" y="297.6" font-size="11" font-weight="bold" fill="#1a1a1a">字</text>
<rect x="5" y="305.6" width="14" height="0.8" fill="#e0e0e0"/>
<!-- dimension -->
<path d="M7.8 322.8 L15.6 315.2 M6.3 321.3 L9.3 324.3 M14.1 313.7 L17.1 316.7" stroke="#555" stroke-width="1.1"/>
<!-- connector -->
<path d="M7.8 335.4 L15.4 343" stroke="#333" stroke-width="1.2"/>
<rect x="5.9" y="333.9" width="3.5" height="3" fill="#d2691e" stroke="#7a3a10" stroke-width="0.6"/>
<rect x="13.9" y="341.6" width="3" height="3" fill="#d2691e" stroke="#7a3a10" stroke-width="0.6"/>
<rect x="5" y="351.6" width="14" height="0.8" fill="#e0e0e0"/>
<!-- shadow -->
<rect x="8.5" y="362" width="8.1" height="8.3" fill="#555"/>
<rect x="6.6" y="360.4" width="8.2" height="8" fill="#f4f4f4" stroke="#444" stroke-width="1"/>
<!-- checker -->
<rect x="6.2" y="380.2" width="10.6" height="11" fill="#fff"/>
<g fill="#111">
<rect x="6.2" y="380.2" width="2.12" height="2.2"/><rect x="10.44" y="380.2" width="2.12" height="2.2"/><rect x="14.68" y="380.2" width="2.12" height="2.2"/>
<rect x="8.32" y="382.4" width="2.12" height="2.2"/><rect x="12.56" y="382.4" width="2.12" height="2.2"/>
<rect x="6.2" y="384.6" width="2.12" height="2.2"/><rect x="10.44" y="384.6" width="2.12" height="2.2"/><rect x="14.68" y="384.6" width="2.12" height="2.2"/>
<rect x="8.32" y="386.8" width="2.12" height="2.2"/><rect x="12.56" y="386.8" width="2.12" height="2.2"/>
<rect x="6.2" y="389" width="2.12" height="2.2"/><rect x="10.44" y="389" width="2.12" height="2.2"/><rect x="14.68" y="389" width="2.12" height="2.2"/>
</g>
<rect x="5" y="397.6" width="14" height="0.8" fill="#e0e0e0"/>
<!-- eyedropper -->
<path d="M7 416 L13.2 409.8" stroke="#8a5a3a" stroke-width="2"/>
<path d="M12 408.6 L16.5 404.8 L18 406.3 L14.2 410.8 Z" fill="#1f1f1f"/>
<!-- red box -->
<rect x="3" y="425" width="16.5" height="18" fill="#fafafa"/>
<path d="M0 420.3 H55 V447.7 H0 Z M3 425 V443 H50 V425 Z" fill="#f23236" fill-rule="evenodd"/>
<!-- bucket -->
<path d="M11.4 427 L16.8 432.2 L11.4 437.4 L6.2 432.2 Z" fill="#fff" stroke="#1f1f1f" stroke-width="1.4"/>
<path d="M8.6 432.6 L14.6 432.6 L11.6 435.2 Z" fill="#e0306a"/>
<path d="M16.2 433.2 Q17.6 435 16.4 436.4 Q15 435.2 16.2 433.2 Z" fill="#c81830"/>
<path d="M16.8 440.2 L20 440.2 L20 437 Z" fill="#111"/>
<!-- smart fill -->
<path d="M11.8 448.2 L15.2 451.2 L11.8 454.2 L8.4 451.2 Z" fill="#fff" stroke="#222" stroke-width="1.1"/>
<rect x="6.3" y="454.6" width="11" height="3" fill="#f4e0d0" stroke="#333" stroke-width="0.8"/>
<rect x="12" y="455" width="5" height="2.3" fill="#c86a30"/>
<rect x="5" y="463.6" width="14" height="0.8" fill="#e0e0e0"/>
<!-- disabled -->
<circle cx="11.7" cy="480.3" r="5.4" fill="none" stroke="#d0d0d0" stroke-width="1.1"/>
<rect x="9.3" y="476.8" width="4.8" height="7" fill="none" stroke="#d0d0d0" stroke-width="0.9"/>
<!-- ruler position marker -->
<path d="M0 0" />
<path d="M23.5 388.5 H34.5" stroke="#222" stroke-width="1" stroke-dasharray="1.6 1.6"/>
</svg>

<!-- page border lines -->
<div class="a" style="left:36px;top:119px;width:864px;height:2px;background:#cfcfcf"></div>
<div class="a" style="left:36px;top:614px;width:864px;height:3px;background:#bdbdbd"></div>

<!-- red rect -->
<div class="a" style="left:205px;top:153px;width:490px;height:369px;border:5px solid #f23236"></div>

<svg class="a" style="left:0;top:0" width="900" height="727" viewBox="0 0 900 727">
<defs>
<radialGradient id="rg" gradientUnits="userSpaceOnUse" cx="446" cy="343" r="138">
<stop offset="0" stop-color="#0a4a22"/>
<stop offset="0.3" stop-color="#0b4520"/>
<stop offset="0.48" stop-color="#0d3c1d"/>
<stop offset="0.6" stop-color="#112e1a"/>
<stop offset="0.7" stop-color="#152317"/>
<stop offset="0.8" stop-color="#1a1c15"/>
<stop offset="0.92" stop-color="#201a14"/>
<stop offset="1" stop-color="#251b14"/>
</radialGradient>
</defs>
<path d="M445.7 342.4 445.9 342.3 446.1 342.1 446.3 341.9 446.5 341.7 446.6 341.4 446.7 341.2 446.8 340.9 446.9 340.6 446.9 340.3 446.9 339.9 446.9 339.6 446.8 339.2 446.7 338.9 446.6 338.5 446.4 338.2 446.2 337.8 446.0 337.5 445.7 337.2 445.4 336.9 445.0 336.6 444.6 336.4 444.2 336.1 443.8 335.9 443.3 335.8 442.8 335.7 442.3 335.6 441.8 335.6 441.2 335.6 440.7 335.7 440.1 335.8 439.6 336.0 439.0 336.2 438.5 336.5 438.0 336.9 437.5 337.3 437.0 337.7 436.5 338.2 436.1 338.7 435.7 339.3 435.4 339.9 435.1 340.6 434.9 341.3 434.7 342.0 434.5 342.7 434.5 343.5 434.5 344.3 434.5 345.1 434.7 345.9 434.8 346.7 435.1 347.5 435.4 348.3 435.8 349.1 436.3 349.8 436.8 350.5 437.4 351.2 438.0 351.8 438.8 352.4 439.5 353.0 440.3 353.4 441.2 353.8 442.1 354.2 443.0 354.5 444.0 354.6 445.0 354.8 446.0 354.8 447.0 354.7 448.1 354.6 449.1 354.4 450.1 354.0 451.1 353.6 452.1 353.2 453.0 352.6 454.0 351.9 454.8 351.2 455.6 350.3 456.4 349.5 457.1 348.5 457.7 347.5 458.2 346.4 458.7 345.2 459.1 344.0 459.4 342.8 459.5 341.5 459.6 340.3 459.6 338.9 459.5 337.6 459.3 336.3 459.0 335.0 458.5 333.7 458.0 332.5 457.4 331.3 456.6 330.1 455.8 329.0 454.9 327.9 453.8 326.9 452.8 326.0 451.6 325.2 450.3 324.5 449.0 323.8 447.6 323.3 446.2 322.9 444.8 322.6 443.3 322.4 441.7 322.3 440.2 322.4 438.7 322.6 437.2 322.9 435.6 323.3 434.2 323.9 432.7 324.6 431.3 325.4 430.0 326.3 428.7 327.4 427.5 328.5 426.4 329.8 425.4 331.1 424.4 332.6 423.6 334.1 422.9 335.7 422.4 337.4 421.9 339.1 421.6 340.9 421.4 342.7 421.4 344.5 421.5 346.3 421.8 348.2 422.2 350.0 422.7 351.8 423.4 353.5 424.2 355.2 425.2 356.9 426.2 358.5 427.5 360.0 428.8 361.3 430.2 362.6 431.8 363.8 433.4 364.9 435.2 365.8 437.0 366.6 438.9 367.2 440.8 367.7 442.8 368.0 444.8 368.2 446.9 368.2 448.9 368.0 451.0 367.7 453.0 367.2 455.0 366.6 456.9 365.7 458.8 364.7 460.6 363.6 462.3 362.3 463.9 360.8 465.5 359.3 466.9 357.6 468.2 355.7 469.3 353.8 470.3 351.7 471.1 349.6 471.8 347.4 472.3 345.2 472.6 342.9 472.8 340.5 472.7 338.2 472.5 335.8 472.1 333.5 471.5 331.1 470.8 328.9 469.8 326.6 468.7 324.5 467.4 322.4 466.0 320.5 464.4 318.6 462.6 316.9 460.7 315.3 458.7 313.9 456.6 312.6 454.4 311.5 452.0 310.6 449.6 309.8 447.2 309.3 444.7 309.0 442.1 308.8 439.6 308.9 437.0 309.2 434.5 309.7 432.0 310.4 429.5 311.3 427.1 312.4 424.8 313.7 422.6 315.2 420.5 316.8 418.5 318.7 416.7 320.7 415.0 322.9 413.5 325.2 412.1 327.6 411.0 330.1 410.0 332.8 409.2 335.5 408.7 338.3 408.4 341.1 408.2 344.0 408.3 346.9 408.7 349.8 409.2 352.6 410.0 355.5 411.0 358.2 412.2 360.9 413.6 363.5 415.3 366.0 417.1 368.3 419.1 370.5 421.3 372.6 423.6 374.4 426.1 376.1 428.7 377.6 431.4 378.8 434.3 379.9 437.2 380.7 440.2 381.3 443.2 381.6 446.3 381.7 449.4 381.6 452.4 381.2 455.5 380.5 458.5 379.6 461.4 378.5 464.2 377.1 467.0 375.4 469.6 373.6 472.0 371.5 474.4 369.3 476.5 366.8 478.5 364.2 480.2 361.4 481.7 358.5 483.1 355.4 484.1 352.3 485.0 349.0 485.6 345.7 485.9 342.3 485.9 338.9 485.7 335.5 485.3 332.1 484.6 328.7 483.6 325.4 482.3 322.1 480.8 319.0 479.1 316.0 477.1 313.1 474.9 310.4 472.5 307.8 469.9 305.5 467.1 303.4 464.1 301.4 461.0 299.8 457.8 298.4 454.4 297.2 451.0 296.3 447.5 295.7 443.9 295.4 440.3 295.3 436.8 295.6 433.2 296.1 429.6 297.0 426.2 298.1 422.8 299.5 419.5 301.2 416.4 303.1 413.4 305.3 410.5 307.8 407.9 310.5 405.5 313.4 403.2 316.5 401.3 319.7 399.5 323.2 398.1 326.8 396.9 330.5 396.0 334.3 395.4 338.1 395.1 342.0 395.1 346.0 395.4 349.9 396.0 353.9 396.9 357.7 398.1 361.5 399.6 365.2 401.4 368.8 403.5 372.3 405.8 375.5 408.4 378.6 411.2 381.5 414.3 384.1 417.5 386.5 421.0 388.7 424.6 390.5 428.3 392.1 432.2 393.3 436.1 394.3 440.2 394.9 444.3 395.2 448.4 395.2 452.5 394.8 456.6 394.1 460.6 393.1 464.5 391.7 468.4 390.0 472.1 388.1 475.6 385.8 479.0 383.2 482.2 380.3 485.2 377.2 487.9 373.9 490.3 370.3 492.5 366.5 494.4 362.6 496.0 358.5 497.3 354.3 498.2 349.9 498.9 345.5 499.1 341.1 499.1 336.6 498.6 332.1 497.9 327.7 496.8 323.3 495.3 319.0 493.6 314.8 491.5 310.8 489.1 307.0 486.4 303.3 483.4 299.9 480.1 296.7 476.6 293.7 472.9 291.1 469.0 288.7 464.9 286.7 460.6 285.0 456.2 283.7 451.8 282.7 447.2 282.1 442.6 281.8 437.9 281.9 433.3 282.4 428.7 283.3 424.2 284.5 419.8 286.1 415.5 288.1 411.4 290.4 407.4 293.0 403.7 296.0 400.2 299.2 396.9 302.8 393.9 306.6 391.2 310.7 388.8 314.9 386.8 319.4 385.0 324.0 383.7 328.8 382.7 333.7 382.1 338.6 381.9 343.6 382.0 348.6 382.6 353.6 383.5 358.6 384.8 363.4 386.5 368.2 388.6 372.8 391.0 377.3 393.7 381.5 396.8 385.6 400.2 389.4 403.9 392.9 407.8 396.1 412.0 399.0 416.4 401.5 421.0 403.7 425.8 405.5 430.7 406.9 435.7 407.9 440.8 408.6 445.9 408.8 451.1 408.6 456.2 407.9 461.3 406.9 466.3 405.4 471.2 403.6 475.9 401.3 480.5 398.7 484.8 395.7 488.9 392.3 492.8 388.6 496.4 384.7 499.6 380.4 502.5 375.8 505.1 371.1 507.3 366.1 509.1 360.9 510.6 355.6 511.6 350.2 512.2 344.7 512.3 339.2 512.1 333.6 511.4 328.1 510.3 322.7 508.7 317.3 506.8 312.1 504.5 307.0 501.7 302.1 498.6 297.4 495.2 293.0 491.4 288.9 487.2 285.1 482.8 281.6 478.2 278.5 473.3 275.8 468.1 273.5 462.8 271.5 457.4 270.1 451.9 269.0 446.3 268.4 440.6 268.3 434.9 268.6 429.3 269.4 423.7 270.6 418.2 272.3 412.9 274.4 407.7 277.0 402.8 280.0 398.0 283.3 393.6 287.1 389.4 291.2 385.5 295.6 382.0 300.4 378.9 305.4 376.1 310.7 373.8 316.2 371.9 321.9 370.4 327.7 369.4 333.7 368.8 339.7 368.7 345.8 369.1 351.9 369.9 357.9 371.2 363.9 373.0 369.7 375.2 375.4 377.8 381.0 380.9 386.3 384.4 391.3 388.2 396.1 392.4 400.5 397.0 404.6 401.9 408.3 407.0 411.7 412.4 414.6 418.1 417.0 423.9 419.0 429.8 420.6 435.9 421.6 442.1 422.2 448.2 422.3 454.4 421.8 460.6 420.9 466.6 419.4 472.6 417.5 478.4 415.1 484.0 412.2 489.3 408.9 494.5 405.2 499.3 401.0 503.8 396.5 507.9 391.5 511.7 386.3 515.0 380.8 517.9 375.0 520.4 368.9 522.4 362.7 523.9 356.3 524.9 349.8 525.5 343.3 525.5 336.7 525.0 330.1 524.0 323.5 522.5 317.0 520.5 310.7 518.0 304.5 515.0 298.6 511.6 292.9 507.8 287.4 503.5 282.3 498.8 277.6 493.8 273.2 488.5 269.2 482.8 265.7 476.9 262.6 470.8 260.0 464.4 257.9 458.0 256.4 451.4 255.3 444.7 254.8 438.0 254.8 431.3 255.4 424.6 256.5 418.1 258.2 411.7 260.3 405.4 263.0 399.4 266.2 393.6 269.9 388.2 274.1 383.0 278.6 378.2 283.6 373.8 289.0 369.8 294.7 366.3 300.8 363.2 307.1 360.6 313.7 358.5 320.4 357.0 327.3 356.0 334.4 355.5 341.5 355.6 348.6 356.2 355.8 357.4 362.8 359.1 369.8 361.4 376.6 364.1 383.2 367.4 389.6 371.2 395.7 375.4 401.5 380.1 407.0 385.2 412.1 390.7 416.7 396.5 420.9 402.6 424.6 409.1 427.9 415.7 430.6 422.6 432.7 429.6 434.3 436.7 435.3 443.9 435.8 451.2 435.7 458.4 434.9 465.5 433.6 472.5 431.8 479.4 429.3 486.1 426.3 492.6 422.8 498.7 418.7 504.6 414.2 510.0 409.2 515.1 403.7 519.8 397.9 524.0 391.7 527.7 385.1 530.9 378.3 533.6 371.2 535.8 363.9 537.3 356.4 538.3 348.8 538.7 341.2 538.5 333.5 537.8 325.9 536.4 318.3 534.4 310.8 531.9 303.5 528.9 296.5 525.2 289.6 521.1 283.1 516.5 277.0 511.4 271.2 505.8 265.8 499.9 260.9 493.6 256.5 486.9 252.6 480.0 249.2 472.8 246.4 465.4 244.2 457.9 242.6 450.2 241.6 442.5 241.2 434.7 241.5 427.0 242.4 419.4 243.9 411.9 246.0 404.5 248.7 397.4 252.0 390.6 255.9 384.0 260.3 377.8 265.3 372.0 270.7 366.6 276.6 361.7 282.9 357.3 289.7 353.4 296.7 350.1 304.1 347.3 311.7 345.1 319.6 343.6 327.6 342.6 335.7 342.3 343.9 342.6 352.1 343.5 360.3 345.1 368.4 347.3 376.3 350.1 384.1 353.4 391.6 357.4 398.8 361.9 405.7 366.9 412.2 372.5 418.3 378.5 424.0 384.9 429.2 391.7 433.8 398.8 437.9 406.3 441.4 414.0 444.2 421.9 446.5 430.0 448.1 438.2 449.1 446.5 449.3 454.7 449.0 462.9 447.9 471.1 446.2 479.1 443.8 486.8 440.8 494.4 437.2 501.6 433.0 508.6 428.1 515.1 422.8 521.2 416.9 526.9 410.5 532.0 403.7 536.6 396.5 540.7 388.9 544.1 381.0 547.0 372.8 549.2 364.4 550.8 355.8 551.7 347.2 551.9 338.4 551.5 329.7 550.4 321.0 548.6 312.4 546.2 304.0 543.1 295.8 539.4 287.8 535.1 280.2 530.2 272.9 524.7 266.0 518.8 259.6 512.3 253.7 505.4 248.3 498.1 243.5 490.4 239.2 482.5 235.6 474.2 232.7 465.8 230.4 457.2 228.8 448.4 227.9 439.7 227.7 430.9 228.2 422.2 229.5 413.5 231.4 405.1 234.0 396.8 237.3 388.9 241.3 381.2 245.9 373.9 251.1 367.1 256.9 360.7 263.3 354.7 270.1 349.4 277.4 344.6 285.2 340.4 293.3 336.8 301.7 333.9 310.4 331.6 319.4 330.1 328.5 329.2 337.7 329.1 347.0 329.7 356.2 331.0 365.4 333.0 374.5 335.7 383.4 339.1 392.1 343.1 400.5 347.8 408.5 353.1 416.2 358.9 423.4 365.3 430.1 372.3 436.3 379.6 441.9 387.4 446.9 395.6 451.3 404.1 455.0 412.9 458.0 421.9 460.3 431.0 461.9 440.3 462.7 449.6 462.8 458.9 462.1 468.1 460.7 477.2 458.5 486.1 455.6 494.8 452.0 503.2 447.7 511.2 442.7 518.9 437.1 526.1 430.9 532.8 424.1 538.9 416.7 544.5 408.9 549.5 400.7 553.9 392.0 557.5 383.0 560.5 373.8 562.7 364.3 564.2 354.6 565.0 344.9 565.0 335.1 564.3 325.3 562.8 315.6 560.6 306.0 557.6 296.6 553.9 287.5 549.5 278.7 544.5 270.2 538.8 262.2 532.5 254.7 525.6 247.7 518.2 241.2 510.4 235.4 502.0 230.2 493.4 225.7 484.3 221.9 475.0 218.8 465.5 216.5 455.8 215.0 446.0 214.2 436.2 214.3 426.4 215.1 416.7 216.8 407.1 219.2 397.7 222.4 388.6 226.3 379.8 231.0 371.4 236.3 363.4 242.4 355.9 249.1 348.9 256.3 342.5 264.2 336.7 272.5 331.5 281.3 327.1 290.5 323.3 300.0 320.3 309.8 318.1 319.8 316.6 330.0 315.9 340.3 316.0 350.7 317.0 361.0 318.7 371.2 321.1 381.3 324.4 391.1 328.4 400.7 333.1 409.9 338.6 418.7 344.7 427.1 351.4 434.9 358.7 442.2 366.6 448.9 375.0 455.0 383.8 460.3 393.0 465.0 402.6 468.8 412.4 471.9 422.5 474.2 432.7 475.7 443.0 476.4 453.4 476.2 463.7 475.2 473.9 473.3 483.9 470.6 493.8 467.1 503.3 462.9 512.5 457.8 521.3 452.1 529.6 445.6 537.5 438.5 544.7 430.7 551.4 422.4 557.3 413.6 562.6 404.2 567.2 394.5 571.0 384.4 574.1 374.1 576.3 363.5 577.7 352.7 578.3 341.9" fill="none" stroke="url(#rg)" stroke-width="9.5" stroke-linecap="butt"/>
<!-- outer dotted outline top-left -->
<path d="M313 330 A133 135 0 0 1 440 208.5" fill="none" stroke="#6e6440" stroke-width="0.7" stroke-dasharray="1.2 2" transform="translate(1.6 1.8)"/>
<!-- gradient circle arc -->
<path d="M450 207.5 A134 135 0 0 1 583 337" fill="none" stroke="#4a5288" stroke-width="1.1" stroke-dasharray="1.6 2"/>
<!-- axis dotted lines -->
<path d="M446.7 212 V343" stroke="#a0b040" stroke-width="1" stroke-dasharray="1.6 2.4"/>
<path d="M446 345 H575" stroke="#a0b040" stroke-width="1" stroke-dasharray="1.6 2.4"/>
<g fill="#f2f2f2" stroke="#3a3a3a" stroke-width="0.6">
<rect x="568.7" y="339.6" width="6" height="3.4" rx="0.8"/><path d="M570.5 340.5 v1.6 M572.9 340.5 v1.6" stroke="#222" stroke-width="1"/>
<rect x="555.5" y="339.6" width="6" height="3.4" rx="0.8"/><path d="M557.3 340.5 v1.6 M559.7 340.5 v1.6" stroke="#222" stroke-width="1"/>
<rect x="542.3" y="339.6" width="6" height="3.4" rx="0.8"/><path d="M544.1 340.5 v1.6 M546.5 340.5 v1.6" stroke="#222" stroke-width="1"/>
<rect x="529.1" y="339.6" width="6" height="3.4" rx="0.8"/><path d="M530.9 340.5 v1.6 M533.3 340.5 v1.6" stroke="#222" stroke-width="1"/>
<rect x="515.9" y="339.6" width="6" height="3.4" rx="0.8"/><path d="M517.7 340.5 v1.6 M520.1 340.5 v1.6" stroke="#222" stroke-width="1"/>
<rect x="502.7" y="339.6" width="6" height="3.4" rx="0.8"/><path d="M504.5 340.5 v1.6 M506.9 340.5 v1.6" stroke="#222" stroke-width="1"/>
<rect x="489.5" y="339.6" width="6" height="3.4" rx="0.8"/><path d="M491.3 340.5 v1.6 M493.7 340.5 v1.6" stroke="#222" stroke-width="1"/>
<rect x="476.3" y="339.6" width="6" height="3.4" rx="0.8"/><path d="M478.1 340.5 v1.6 M480.5 340.5 v1.6" stroke="#222" stroke-width="1"/>
<rect x="463.1" y="339.6" width="6" height="3.4" rx="0.8"/><path d="M464.9 340.5 v1.6 M467.3 340.5 v1.6" stroke="#222" stroke-width="1"/>
<rect x="449.9" y="339.6" width="6" height="3.4" rx="0.8"/><path d="M451.7 340.5 v1.6 M454.1 340.5 v1.6" stroke="#222" stroke-width="1"/>
<rect x="525.7" y="254.1" width="3.8" height="3.8" rx="0.8" transform="rotate(45 527.6 256.0)"/><circle cx="527.6" cy="256.0" r="0.7" fill="#333" stroke="none"/>
<rect x="516.4" y="263.6" width="3.8" height="3.8" rx="0.8" transform="rotate(45 518.3 265.5)"/><circle cx="518.3" cy="265.5" r="0.7" fill="#333" stroke="none"/>
<rect x="507.1" y="273.2" width="3.8" height="3.8" rx="0.8" transform="rotate(45 509.0 275.1)"/><circle cx="509.0" cy="275.1" r="0.7" fill="#333" stroke="none"/>
<rect x="497.7" y="282.8" width="3.8" height="3.8" rx="0.8" transform="rotate(45 499.6 284.7)"/><circle cx="499.6" cy="284.7" r="0.7" fill="#333" stroke="none"/>
<rect x="488.4" y="292.3" width="3.8" height="3.8" rx="0.8" transform="rotate(45 490.3 294.2)"/><circle cx="490.3" cy="294.2" r="0.7" fill="#333" stroke="none"/>
<rect x="479.1" y="301.9" width="3.8" height="3.8" rx="0.8" transform="rotate(45 481.0 303.8)"/><circle cx="481.0" cy="303.8" r="0.7" fill="#333" stroke="none"/>
<rect x="469.7" y="311.5" width="3.8" height="3.8" rx="0.8" transform="rotate(45 471.6 313.4)"/><circle cx="471.6" cy="313.4" r="0.7" fill="#333" stroke="none"/>
<rect x="460.4" y="321.0" width="3.8" height="3.8" rx="0.8" transform="rotate(45 462.3 322.9)"/><circle cx="462.3" cy="322.9" r="0.7" fill="#333" stroke="none"/>
<rect x="451.1" y="330.6" width="3.8" height="3.8" rx="0.8" transform="rotate(45 453.0 332.5)"/><circle cx="453.0" cy="332.5" r="0.7" fill="#333" stroke="none"/>
<rect x="532.2" y="247.4" width="3.8" height="3.8" rx="0.8" transform="rotate(45 534.1 249.3)"/><circle cx="534.1" cy="249.3" r="0.7" fill="#333" stroke="none"/>
<rect x="439.5" y="217.9" width="3.4" height="6" rx="0.8"/><path d="M440.4 219.8 h1.6 M440.4 222.1 h1.6" stroke="#222" stroke-width="1"/>
<rect x="439.5" y="231.5" width="3.4" height="6" rx="0.8"/><path d="M440.4 233.3 h1.6 M440.4 235.7 h1.6" stroke="#222" stroke-width="1"/>
<rect x="439.5" y="245.0" width="3.4" height="6" rx="0.8"/><path d="M440.4 246.8 h1.6 M440.4 249.2 h1.6" stroke="#222" stroke-width="1"/>
<rect x="439.5" y="258.5" width="3.4" height="6" rx="0.8"/><path d="M440.4 260.3 h1.6 M440.4 262.7 h1.6" stroke="#222" stroke-width="1"/>
<rect x="439.5" y="272.1" width="3.4" height="6" rx="0.8"/><path d="M440.4 273.9 h1.6 M440.4 276.3 h1.6" stroke="#222" stroke-width="1"/>
<rect x="439.5" y="285.6" width="3.4" height="6" rx="0.8"/><path d="M440.4 287.4 h1.6 M440.4 289.8 h1.6" stroke="#222" stroke-width="1"/>
<rect x="439.5" y="299.1" width="3.4" height="6" rx="0.8"/><path d="M440.4 300.9 h1.6 M440.4 303.3 h1.6" stroke="#222" stroke-width="1"/>
<rect x="439.5" y="312.7" width="3.4" height="6" rx="0.8"/><path d="M440.4 314.5 h1.6 M440.4 316.9 h1.6" stroke="#222" stroke-width="1"/>
<rect x="439.5" y="326.2" width="3.4" height="6" rx="0.8"/><path d="M440.4 328.0 h1.6 M440.4 330.4 h1.6" stroke="#222" stroke-width="1"/>
<rect x="438.6" y="206.3" width="3.4" height="6" rx="0.8"/><path d="M439.5 208.1 h1.6 M439.5 210.5 h1.6" stroke="#222" stroke-width="1"/>
<rect x="355.7" y="251.7" width="3.8" height="3.8" rx="0.8" transform="rotate(45 357.6 253.6)"/><circle cx="357.6" cy="253.6" r="0.7" fill="#333" stroke="none"/>
<rect x="365.1" y="261.3" width="3.8" height="3.8" rx="0.8" transform="rotate(45 367.0 263.2)"/><circle cx="367.0" cy="263.2" r="0.7" fill="#333" stroke="none"/>
<rect x="374.4" y="270.8" width="3.8" height="3.8" rx="0.8" transform="rotate(45 376.3 272.7)"/><circle cx="376.3" cy="272.7" r="0.7" fill="#333" stroke="none"/>
<rect x="383.7" y="280.4" width="3.8" height="3.8" rx="0.8" transform="rotate(45 385.6 282.3)"/><circle cx="385.6" cy="282.3" r="0.7" fill="#333" stroke="none"/>
<rect x="393.1" y="290.0" width="3.8" height="3.8" rx="0.8" transform="rotate(45 395.0 291.9)"/><circle cx="395.0" cy="291.9" r="0.7" fill="#333" stroke="none"/>
<rect x="402.4" y="299.5" width="3.8" height="3.8" rx="0.8" transform="rotate(45 404.3 301.4)"/><circle cx="404.3" cy="301.4" r="0.7" fill="#333" stroke="none"/>
<rect x="411.7" y="309.1" width="3.8" height="3.8" rx="0.8" transform="rotate(45 413.6 311.0)"/><circle cx="413.6" cy="311.0" r="0.7" fill="#333" stroke="none"/>
<rect x="421.1" y="318.7" width="3.8" height="3.8" rx="0.8" transform="rotate(45 423.0 320.6)"/><circle cx="423.0" cy="320.6" r="0.7" fill="#333" stroke="none"/>
<rect x="430.4" y="328.2" width="3.8" height="3.8" rx="0.8" transform="rotate(45 432.3 330.1)"/><circle cx="432.3" cy="330.1" r="0.7" fill="#333" stroke="none"/>
<rect x="349.3" y="245.1" width="3.8" height="3.8" rx="0.8" transform="rotate(45 351.2 247.0)"/><circle cx="351.2" cy="247.0" r="0.7" fill="#333" stroke="none"/>
<rect x="319.5" y="339.6" width="6" height="3.4" rx="0.8"/><path d="M321.3 340.5 v1.6 M323.7 340.5 v1.6" stroke="#222" stroke-width="1"/>
<rect x="332.7" y="339.6" width="6" height="3.4" rx="0.8"/><path d="M334.5 340.5 v1.6 M336.9 340.5 v1.6" stroke="#222" stroke-width="1"/>
<rect x="345.9" y="339.6" width="6" height="3.4" rx="0.8"/><path d="M347.7 340.5 v1.6 M350.1 340.5 v1.6" stroke="#222" stroke-width="1"/>
<rect x="359.1" y="339.6" width="6" height="3.4" rx="0.8"/><path d="M360.9 340.5 v1.6 M363.3 340.5 v1.6" stroke="#222" stroke-width="1"/>
<rect x="372.3" y="339.6" width="6" height="3.4" rx="0.8"/><path d="M374.1 340.5 v1.6 M376.5 340.5 v1.6" stroke="#222" stroke-width="1"/>
<rect x="385.5" y="339.6" width="6" height="3.4" rx="0.8"/><path d="M387.3 340.5 v1.6 M389.7 340.5 v1.6" stroke="#222" stroke-width="1"/>
<rect x="398.7" y="339.6" width="6" height="3.4" rx="0.8"/><path d="M400.5 340.5 v1.6 M402.9 340.5 v1.6" stroke="#222" stroke-width="1"/>
<rect x="411.9" y="339.6" width="6" height="3.4" rx="0.8"/><path d="M413.7 340.5 v1.6 M416.1 340.5 v1.6" stroke="#222" stroke-width="1"/>
<rect x="425.1" y="339.6" width="6" height="3.4" rx="0.8"/><path d="M426.9 340.5 v1.6 M429.3 340.5 v1.6" stroke="#222" stroke-width="1"/>
<rect x="308.1" y="339.6" width="6" height="3.4" rx="0.8"/><path d="M309.9 340.5 v1.6 M312.3 340.5 v1.6" stroke="#222" stroke-width="1"/>
<rect x="353.4" y="430.7" width="3.8" height="3.8" rx="0.8" transform="rotate(45 355.3 432.6)"/><circle cx="355.3" cy="432.6" r="0.7" fill="#333" stroke="none"/>
<rect x="362.7" y="421.1" width="3.8" height="3.8" rx="0.8" transform="rotate(45 364.6 423.0)"/><circle cx="364.6" cy="423.0" r="0.7" fill="#333" stroke="none"/>
<rect x="372.1" y="411.6" width="3.8" height="3.8" rx="0.8" transform="rotate(45 374.0 413.5)"/><circle cx="374.0" cy="413.5" r="0.7" fill="#333" stroke="none"/>
<rect x="381.4" y="402.0" width="3.8" height="3.8" rx="0.8" transform="rotate(45 383.3 403.9)"/><circle cx="383.3" cy="403.9" r="0.7" fill="#333" stroke="none"/>
<rect x="390.7" y="392.4" width="3.8" height="3.8" rx="0.8" transform="rotate(45 392.6 394.3)"/><circle cx="392.6" cy="394.3" r="0.7" fill="#333" stroke="none"/>
<rect x="400.1" y="382.9" width="3.8" height="3.8" rx="0.8" transform="rotate(45 402.0 384.8)"/><circle cx="402.0" cy="384.8" r="0.7" fill="#333" stroke="none"/>
<rect x="409.4" y="373.3" width="3.8" height="3.8" rx="0.8" transform="rotate(45 411.3 375.2)"/><circle cx="411.3" cy="375.2" r="0.7" fill="#333" stroke="none"/>
<rect x="418.7" y="363.7" width="3.8" height="3.8" rx="0.8" transform="rotate(45 420.6 365.6)"/><circle cx="420.6" cy="365.6" r="0.7" fill="#333" stroke="none"/>
<rect x="428.1" y="354.2" width="3.8" height="3.8" rx="0.8" transform="rotate(45 430.0 356.1)"/><circle cx="430.0" cy="356.1" r="0.7" fill="#333" stroke="none"/>
<rect x="346.9" y="437.3" width="3.8" height="3.8" rx="0.8" transform="rotate(45 348.8 439.2)"/><circle cx="348.8" cy="439.2" r="0.7" fill="#333" stroke="none"/>
<rect x="444.7" y="466.6" width="3.4" height="6" rx="0.8"/><path d="M445.6 468.4 h1.6 M445.6 470.8 h1.6" stroke="#222" stroke-width="1"/>
<rect x="444.7" y="453.1" width="3.4" height="6" rx="0.8"/><path d="M445.6 454.9 h1.6 M445.6 457.3 h1.6" stroke="#222" stroke-width="1"/>
<rect x="444.7" y="439.6" width="3.4" height="6" rx="0.8"/><path d="M445.6 441.4 h1.6 M445.6 443.8 h1.6" stroke="#222" stroke-width="1"/>
<rect x="444.7" y="426.0" width="3.4" height="6" rx="0.8"/><path d="M445.6 427.8 h1.6 M445.6 430.2 h1.6" stroke="#222" stroke-width="1"/>
<rect x="444.7" y="412.5" width="3.4" height="6" rx="0.8"/><path d="M445.6 414.3 h1.6 M445.6 416.7 h1.6" stroke="#222" stroke-width="1"/>
<rect x="444.7" y="399.0" width="3.4" height="6" rx="0.8"/><path d="M445.6 400.8 h1.6 M445.6 403.2 h1.6" stroke="#222" stroke-width="1"/>
<rect x="444.7" y="385.4" width="3.4" height="6" rx="0.8"/><path d="M445.6 387.2 h1.6 M445.6 389.6 h1.6" stroke="#222" stroke-width="1"/>
<rect x="444.7" y="371.9" width="3.4" height="6" rx="0.8"/><path d="M445.6 373.7 h1.6 M445.6 376.1 h1.6" stroke="#222" stroke-width="1"/>
<rect x="444.7" y="358.4" width="3.4" height="6" rx="0.8"/><path d="M445.6 360.2 h1.6 M445.6 362.6 h1.6" stroke="#222" stroke-width="1"/>
<rect x="444.7" y="478.2" width="3.4" height="6" rx="0.8"/><path d="M445.6 480.0 h1.6 M445.6 482.4 h1.6" stroke="#222" stroke-width="1"/>
<rect x="532.7" y="433.1" width="3.8" height="3.8" rx="0.8" transform="rotate(45 534.6 435.0)"/><circle cx="534.6" cy="435.0" r="0.7" fill="#333" stroke="none"/>
<rect x="523.4" y="423.5" width="3.8" height="3.8" rx="0.8" transform="rotate(45 525.3 425.4)"/><circle cx="525.3" cy="425.4" r="0.7" fill="#333" stroke="none"/>
<rect x="514.1" y="414.0" width="3.8" height="3.8" rx="0.8" transform="rotate(45 516.0 415.9)"/><circle cx="516.0" cy="415.9" r="0.7" fill="#333" stroke="none"/>
<rect x="504.7" y="404.4" width="3.8" height="3.8" rx="0.8" transform="rotate(45 506.6 406.3)"/><circle cx="506.6" cy="406.3" r="0.7" fill="#333" stroke="none"/>
<rect x="495.4" y="394.8" width="3.8" height="3.8" rx="0.8" transform="rotate(45 497.3 396.7)"/><circle cx="497.3" cy="396.7" r="0.7" fill="#333" stroke="none"/>
<rect x="486.1" y="385.3" width="3.8" height="3.8" rx="0.8" transform="rotate(45 488.0 387.2)"/><circle cx="488.0" cy="387.2" r="0.7" fill="#333" stroke="none"/>
<rect x="476.7" y="375.7" width="3.8" height="3.8" rx="0.8" transform="rotate(45 478.6 377.6)"/><circle cx="478.6" cy="377.6" r="0.7" fill="#333" stroke="none"/>
<rect x="467.4" y="366.1" width="3.8" height="3.8" rx="0.8" transform="rotate(45 469.3 368.0)"/><circle cx="469.3" cy="368.0" r="0.7" fill="#333" stroke="none"/>
<rect x="458.1" y="356.6" width="3.8" height="3.8" rx="0.8" transform="rotate(45 460.0 358.5)"/><circle cx="460.0" cy="358.5" r="0.7" fill="#333" stroke="none"/>
<rect x="539.2" y="439.7" width="3.8" height="3.8" rx="0.8" transform="rotate(45 541.1 441.6)"/><circle cx="541.1" cy="441.6" r="0.7" fill="#333" stroke="none"/>
</g>
<!-- handles -->
<circle cx="446.6" cy="207.6" r="4" fill="#fafafa" stroke="#777" stroke-width="0.9"/>
<rect x="440" y="206.6" width="2.6" height="2.6" fill="#ddd" stroke="#777" stroke-width="0.6"/>
<rect x="513.6" y="338.6" width="2.2" height="13.4" fill="#fff"/>
<rect x="571" y="342" width="2.8" height="6" fill="#1f2fd8"/>
<rect x="574.3" y="344.2" width="2" height="2" fill="#e8e040"/>
<rect x="577" y="339.5" width="10" height="9.4" fill="#1e1a16"/>
<path d="M582 340.4 H578.4 V348 H582" fill="none" stroke="#9a9a9a" stroke-width="1.2"/>
<rect x="576.6" y="335.4" width="4" height="3" fill="#222" stroke="#999" stroke-width="0.6"/>
<!-- center blob -->
<path d="M438.5 340.5 Q440 337.6 444 338.6 Q448 338 450 338.8 Q454 339.5 453.6 343 Q455 347 452.5 349.5 Q449.5 352.6 445.5 350.8 Q441.5 352.4 439.8 349.6 Q437.6 346.6 439.2 344 Z" fill="#0b4321" stroke="#d8d8d8" stroke-width="1.1"/>

</svg>

<!-- bottom -->
<div class="a" style="left:36px;top:674.7px;width:638.5px;height:11.5px;background:#f1f1f1;border-top:1.3px solid #b8b8b8;border-right:1px solid #b8b8b8"></div>
<div class="a" style="left:675.5px;top:676px;width:10.7px;height:10.2px;background:#ececec"></div>
<div class="a" style="left:856px;top:675.2px;width:44px;height:10.6px;background:linear-gradient(#ececec,#d2d2d2 60%,#c4c4c4);border:1px solid #b4b4b4;border-right:none;border-radius:2px 0 0 2px"></div>
<svg class="a" style="left:0;top:660px" width="900" height="40" viewBox="0 660 900 40">
<path d="M137.6 674.7 L142 686 H166.4 L170.6 674.7 Z" fill="#fff"/>
<path d="M137.6 674.7 L142 686 M166.4 686 L170.6 674.7" stroke="#a8a8a8" stroke-width="1"/>
<rect x="137" y="674" width="34" height="1.5" fill="#fff"/>
<path d="M137.6 674.7 L142 686 M166.4 686 L170.6 674.7" stroke="#a8a8a8" stroke-width="1"/>
<g fill="none" stroke="#8a8a8a" stroke-width="0.8">
<rect x="37.6" y="677.5" width="5.4" height="6.5"/>
<rect x="124.3" y="677.5" width="5.4" height="6.5"/>
</g>
<path d="M39 680.8 h2.6 M40.3 679.5 v2.6 M125.7 680.8 h2.6 M127 679.5 v2.6" stroke="#8a8a8a" stroke-width="0.7"/>
<g fill="#c4c4c4">
<rect x="49" y="677" width="1.2" height="7"/><path d="M55.7 677 V684 L50.8 680.5 Z"/>
<path d="M66 677 V684 L60.8 680.5 Z"/>
<path d="M101 677 V684 L106.2 680.5 Z"/>
<path d="M112 677 V684 L117 680.5 Z"/><rect x="117.3" y="677" width="1.2" height="7"/>
</g>
<rect x="670.6" y="677" width="0.7" height="8" fill="#ccc"/>
<path d="M682.3 677.8 V683.6 L678.6 680.7 Z" fill="#222"/>
<!-- palette bar -->
<path d="M33 689.8 V695.6 L36 692.7 Z" fill="#111"/>
<path d="M44.5 697.5 L49.8 692.2" stroke="#333" stroke-width="1.3"/>
<path d="M49 691.2 L51.8 689 L53.2 690.4 L51 693.2 Z" fill="#222"/>
<path d="M61.3 689.5 V698" stroke="#c8c8c8" stroke-width="1" stroke-dasharray="1 1"/>
<rect x="67.9" y="688.2" width="12" height="11" fill="#fff" stroke="#555" stroke-width="0.9"/>
<path d="M67.9 688.2 L79.9 699.2 M79.9 688.2 L67.9 699.2" stroke="#555" stroke-width="0.8"/>
<rect x="79.9" y="688.2" width="12" height="11" fill="#e60f19"/>
<rect x="91.9" y="688.2" width="12" height="11" fill="#12a0e2"/>
<rect x="103.9" y="688.2" width="12" height="11" fill="#c8761e"/>
<rect x="115.9" y="688.2" width="12" height="11" fill="#211914"/>
<rect x="127.9" y="688.2" width="12" height="11" fill="#e8216e"/>
<rect x="139.9" y="688.2" width="12" height="11" fill="#ad1517"/>
<rect x="151.9" y="688.2" width="12" height="11" fill="#b5200f"/>
<rect x="163.9" y="688.2" width="12" height="11" fill="#8c0e0e"/>
<rect x="175.9" y="688.2" width="11.2" height="11" fill="#ffe600"/>
<rect x="67.9" y="688.2" width="119.2" height="11" fill="none" stroke="#7a7a7a" stroke-width="0.6"/>
</svg>
<div class="t" style="left:70px;top:676.8px;font-size:8.8px;color:#222;word-spacing:1.5px">1 的 1</div>
<div class="t" style="left:146px;top:676.8px;font-size:8.6px;color:#222">页1</div>
<div class="a" style="left:0;top:700.8px;width:900px;height:26.2px;background:#f2f2f2;border-top:1px solid #dadada"></div>
<div class="t" style="left:4.5px;top:711px;font-size:8.6px;color:#222;transform:scaleX(0.91)">( 154.762, 68.830 )</div>
<svg class="a" style="left:0;top:700px" width="900" height="27" viewBox="0 700 900 27">
<path d="M85.7 711.8 V716.8 L88.4 714.3 Z" fill="#111"/>
</svg>
<div class="t" style="left:114.5px;top:710.5px;font-size:8.6px;color:#222;transform:scaleX(0.955)">曲线 于 图层1</div>
</body></html>
